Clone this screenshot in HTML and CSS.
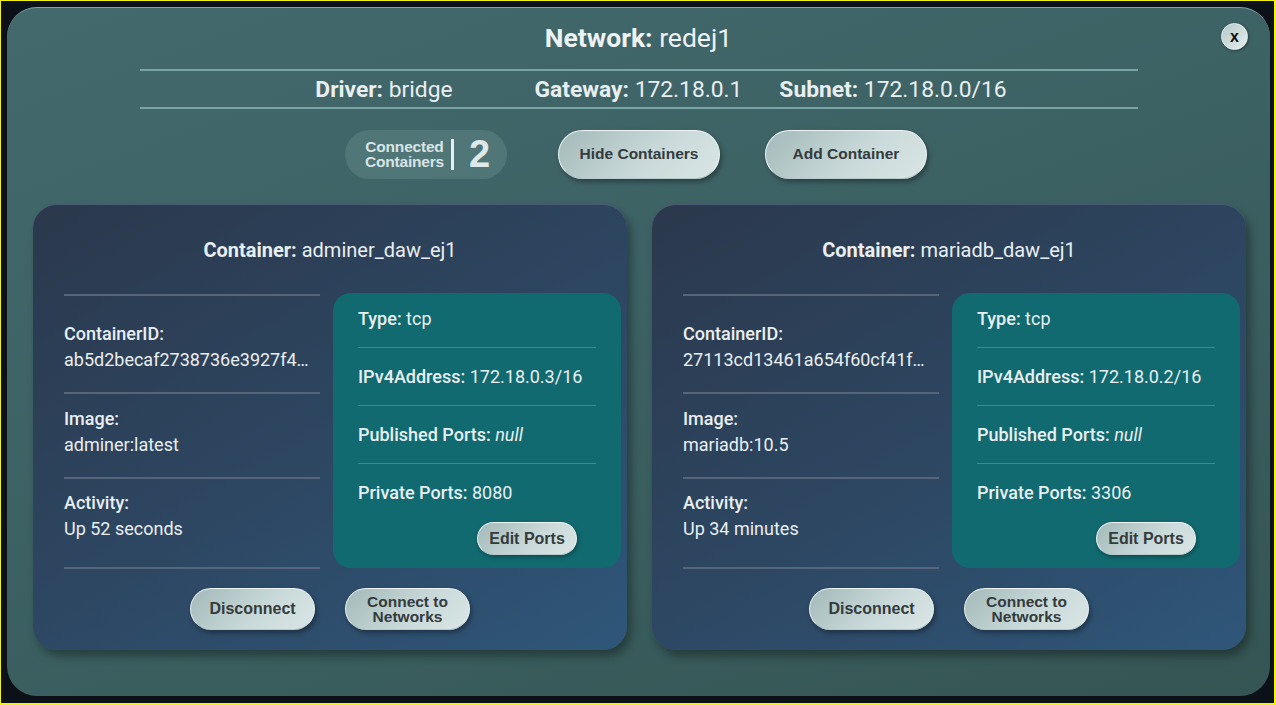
FILE: index.html
```html
<!DOCTYPE html>
<html>
<head>
<meta charset="utf-8">
<link rel="stylesheet" href="styles.css">
</head>
<body>
<div class="screen">
  <div class="modal">
    <button class="close">x</button>
    <h1 class="title"><b>Network:</b> redej1</h1>
    <div class="info">
      <span class="info-item driver"><b>Driver:</b> bridge</span>
      <span class="info-item"><b>Gateway:</b> 172.18.0.1</span>
      <span class="info-item"><b>Subnet:</b> 172.18.0.0/16</span>
    </div>
    <div class="actions">
      <div class="badge">
        <span class="badge-label">Connected<br>Containers</span>
        <span class="badge-bar"></span>
        <span class="badge-count">2</span>
      </div>
      <button class="btn btn-lg">Hide Containers</button>
      <button class="btn btn-lg">Add Container</button>
    </div>
    <div class="cards">
      <div class="card">
        <h2 class="card-title"><b>Container:</b> adminer_daw_ej1</h2>
        <div class="card-body">
          <div class="details">
            <div class="detail d1"><b>ContainerID:</b><span class="val">ab5d2becaf2738736e3927f4…</span></div>
            <div class="detail d2"><b>Image:</b><span class="val">adminer:latest</span></div>
            <div class="detail d3"><b>Activity:</b><span class="val">Up 52 seconds</span></div>
          </div>
          <div class="ports">
            <div class="port-row first"><b>Type:</b> tcp</div>
            <div class="port-row"><b>IPv4Address:</b> 172.18.0.3/16</div>
            <div class="port-row"><b>Published Ports:</b> <i>null</i></div>
            <div class="port-row last"><b>Private Ports:</b> 8080</div>
            <div class="ports-foot"><button class="btn btn-sm">Edit Ports</button></div>
          </div>
        </div>
        <div class="card-foot">
          <button class="btn btn-md">Disconnect</button>
          <button class="btn btn-md two">Connect to<br>Networks</button>
        </div>
      </div>
      <div class="card">
        <h2 class="card-title"><b>Container:</b> mariadb_daw_ej1</h2>
        <div class="card-body">
          <div class="details">
            <div class="detail d1"><b>ContainerID:</b><span class="val">27113cd13461a654f60cf41f…</span></div>
            <div class="detail d2"><b>Image:</b><span class="val">mariadb:10.5</span></div>
            <div class="detail d3"><b>Activity:</b><span class="val">Up 34 minutes</span></div>
          </div>
          <div class="ports">
            <div class="port-row first"><b>Type:</b> tcp</div>
            <div class="port-row"><b>IPv4Address:</b> 172.18.0.2/16</div>
            <div class="port-row"><b>Published Ports:</b> <i>null</i></div>
            <div class="port-row last"><b>Private Ports:</b> 3306</div>
            <div class="ports-foot"><button class="btn btn-sm">Edit Ports</button></div>
          </div>
        </div>
        <div class="card-foot">
          <button class="btn btn-md">Disconnect</button>
          <button class="btn btn-md two">Connect to<br>Networks</button>
        </div>
      </div>
    </div>
  </div>
</div>
</body>
</html>
```

FILE: styles.css
```css
* { box-sizing: border-box; }
html, body { margin: 0; padding: 0; }
body {
  width: 1276px;
  height: 705px;
  overflow: hidden;
  font-family: Roboto, "Liberation Sans", sans-serif;
  color: #e9eff1;
}
.screen {
  width: 1276px;
  height: 705px;
  background: #0b1117;
  border-style: solid;
  border-color: #f2f20a;
  border-width: 1px 2px 2px 1px;
  padding: 6px 0 0 6px;
}
.modal {
  position: relative;
  width: 1263px;
  height: 689px;
  border-radius: 30px;
  border-top: 1px solid #79a7ab;
  background: linear-gradient(160deg, #44696d 0%, #3d6264 45%, #355553 100%);
  display: flex;
  flex-direction: column;
  align-items: center;
  padding-top: 14px;
}
.close {
  position: absolute;
  right: 22px;
  top: 15px;
  width: 27px;
  height: 27px;
  border-radius: 50%;
  border: 1px solid #e8f0f0;
  background: linear-gradient(135deg, #b5c8c8, #e6eeee);
  font-family: "Liberation Sans", sans-serif;
  font-weight: bold;
  font-size: 16px;
  line-height: 20px;
  color: #111;
  padding: 0;
  box-shadow: 1px 1px 3px rgba(0,0,0,0.35);
}
.title {
  margin: 0;
  font-size: 26.5px;
  line-height: 32px;
  font-weight: 400;
  color: #edf2f3;
}
.title b { font-weight: 700; }
.info {
  margin-top: 15px;
  width: 998px;
  height: 40px;
  border-top: 2px solid #7aa3a6;
  border-bottom: 2px solid #7aa3a6;
  display: flex;
  justify-content: center;
  align-items: center;
  gap: 37px;
  font-size: 22.8px;
  padding-left: 45px;
}
.info-item b { font-weight: 700; }
.info-item.driver { margin-right: 45px; }
.actions {
  margin-top: 20px;
  display: flex;
  align-items: center;
  height: 50px;
  margin-left: -5px;
}
.badge {
  width: 162px;
  height: 49px;
  border-radius: 25px;
  background: rgba(160, 200, 200, 0.17);
  display: flex;
  align-items: center;
  padding-left: 20px;
  margin-right: 51px;
}
.badge-label {
  font-family: "Liberation Sans", sans-serif;
  font-weight: bold;
  font-size: 15.5px;
  line-height: 15px;
  color: #d8e4e5;
  letter-spacing: -0.2px;
  text-align: center;
}
.badge-bar {
  width: 3px;
  height: 31px;
  background: #e6eeee;
  margin: 0 15px 0 7px;
}
.badge-count {
  font-family: "Liberation Sans", sans-serif;
  font-size: 38px;
  font-weight: bold;
  color: #dfe9ea;
}
.btn {
  font-family: "Liberation Sans", sans-serif;
  font-weight: bold;
  color: #343b3c;
  border: 1px solid #eef4f4;
  border-bottom-color: #b8caca;
  background: linear-gradient(135deg, #a3b9b9 0%, #c8d8d8 55%, #dbe6e6 100%);
  box-shadow: 2px 3px 5px rgba(0,0,0,0.35);
  padding: 0;
}
.btn-lg {
  width: 162px;
  height: 49px;
  border-radius: 25px;
  font-size: 15.5px;
}
.btn-lg + .btn-lg { margin-left: 45px; }
.cards {
  margin-top: 25px;
  display: flex;
  gap: 25px;
  margin-left: 2px;
}
.card {
  width: 594px;
  height: 446px;
  border-radius: 24px;
  border-top: 1px solid #4a5a74;
  background: linear-gradient(150deg, #2b384c 0%, #2d4661 50%, #2f5679 100%);
  box-shadow: 4px 6px 10px rgba(0,0,0,0.35);
  padding: 32px 6px 0 31px;
  display: flex;
  flex-direction: column;
}
.card-title {
  margin: 0;
  text-align: center;
  font-size: 20px;
  line-height: 26px;
  font-weight: 400;
  padding-right: 25px;
}
.card-title b { font-weight: 700; }
.card-body {
  margin-top: 30px;
  display: flex;
  gap: 13px;
  height: 275px;
}
.details {
  width: 256px;
  margin-top: 1px;
  font-size: 18px;
  line-height: 26px;
}
.detail {
  border-top: 2px solid #56657a;
  display: flex;
  flex-direction: column;
  white-space: nowrap;
}
.detail b { font-weight: 500; }
.d1 { padding: 25px 0 19px; }
.d2 { padding: 12px 0 19px; }
.d3 { padding: 11px 0 25px; border-bottom: 2px solid #56657a; }
.val { font-weight: 400; }
.ports {
  width: 288px;
  height: 275px;
  border-radius: 18px;
  background: #116a70;
  padding: 0 25px;
  font-size: 18px;
  line-height: 26px;
}
.port-row {
  padding: 16px 0 15px;
  border-bottom: 1px solid #3d8c91;
}
.port-row b { font-weight: 500; }
.port-row.first { padding-top: 13px; }
.port-row.last { border-bottom: none; padding-bottom: 0; }
.ports-foot {
  display: flex;
  justify-content: flex-end;
  margin-top: 16px;
  padding-right: 19px;
}
.btn-sm {
  width: 100px;
  height: 33px;
  border-radius: 17px;
  font-size: 16px;
  box-shadow: 1px 2px 4px rgba(0,0,0,0.3);
}
.card-foot {
  margin-top: 20px;
  display: flex;
  justify-content: center;
  gap: 30px;
  padding-right: 25px;
}
.btn-md {
  width: 125px;
  height: 42px;
  border-radius: 21px;
  font-size: 16px;
}
.btn-md.two {
  font-size: 15.5px;
  line-height: 15px;
}
```
